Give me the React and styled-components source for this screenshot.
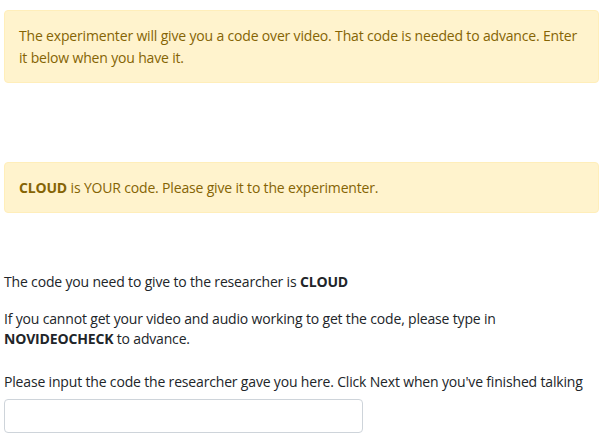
import { createGlobalStyle } from "styled-components";
import styled from "styled-components";

const GlobalStyle = createGlobalStyle`
body {
  margin: 0;
  background: #ffffff;
  font-family: "Open Sans", "Liberation Sans", sans-serif;
  font-size: 14px;
  letter-spacing: -0.17px;
  color: #212529;
}
`

export default function App() {
    return (
        <Page>
            <GlobalStyle />
            <Alert>
                The experimenter will give you a code over video. That code is needed to advance. Enter it below when you have it.
            </Alert>
            <Spacer />
            <Alert>
                <b>CLOUD</b> is YOUR code. Please give it to the experimenter.
            </Alert>
            <Texto top={59}>The code you need to give to the researcher is <b>CLOUD</b></Texto>
            <Texto top={17}>
                If you cannot get your video and audio working to get the code, please type in <b>NOVIDEOCHECK</b> to advance.
            </Texto>
            <Texto top={23}>Please input the code the researcher gave you here. Click Next when you've finished talking</Texto>
            <CodeInput type="text" />
        </Page>
    )
}

const Page = styled.div`
padding: 10px 10px 10px 4px;
display: flex;
flex-direction: column;
`

const Alert = styled.div`
width: 565px;
padding: 14px 14px 13px 14px;
border: 1px solid #ffeeba;
border-radius: 4px;
background-color: #fff3cd;
color: #856404;
line-height: 22px;
b {
  font-weight: 700;
}
`

const Spacer = styled.div`
height: 79px;
`

const Texto = styled.p`
margin: ${(p) => p.top}px 0 0 0;
line-height: 20px;
width: 600px;
`

const CodeInput = styled.input`
margin-top: 7px;
width: 359px;
height: 34px;
box-sizing: border-box;
border: 1px solid #ced4da;
border-radius: 4px;
`
